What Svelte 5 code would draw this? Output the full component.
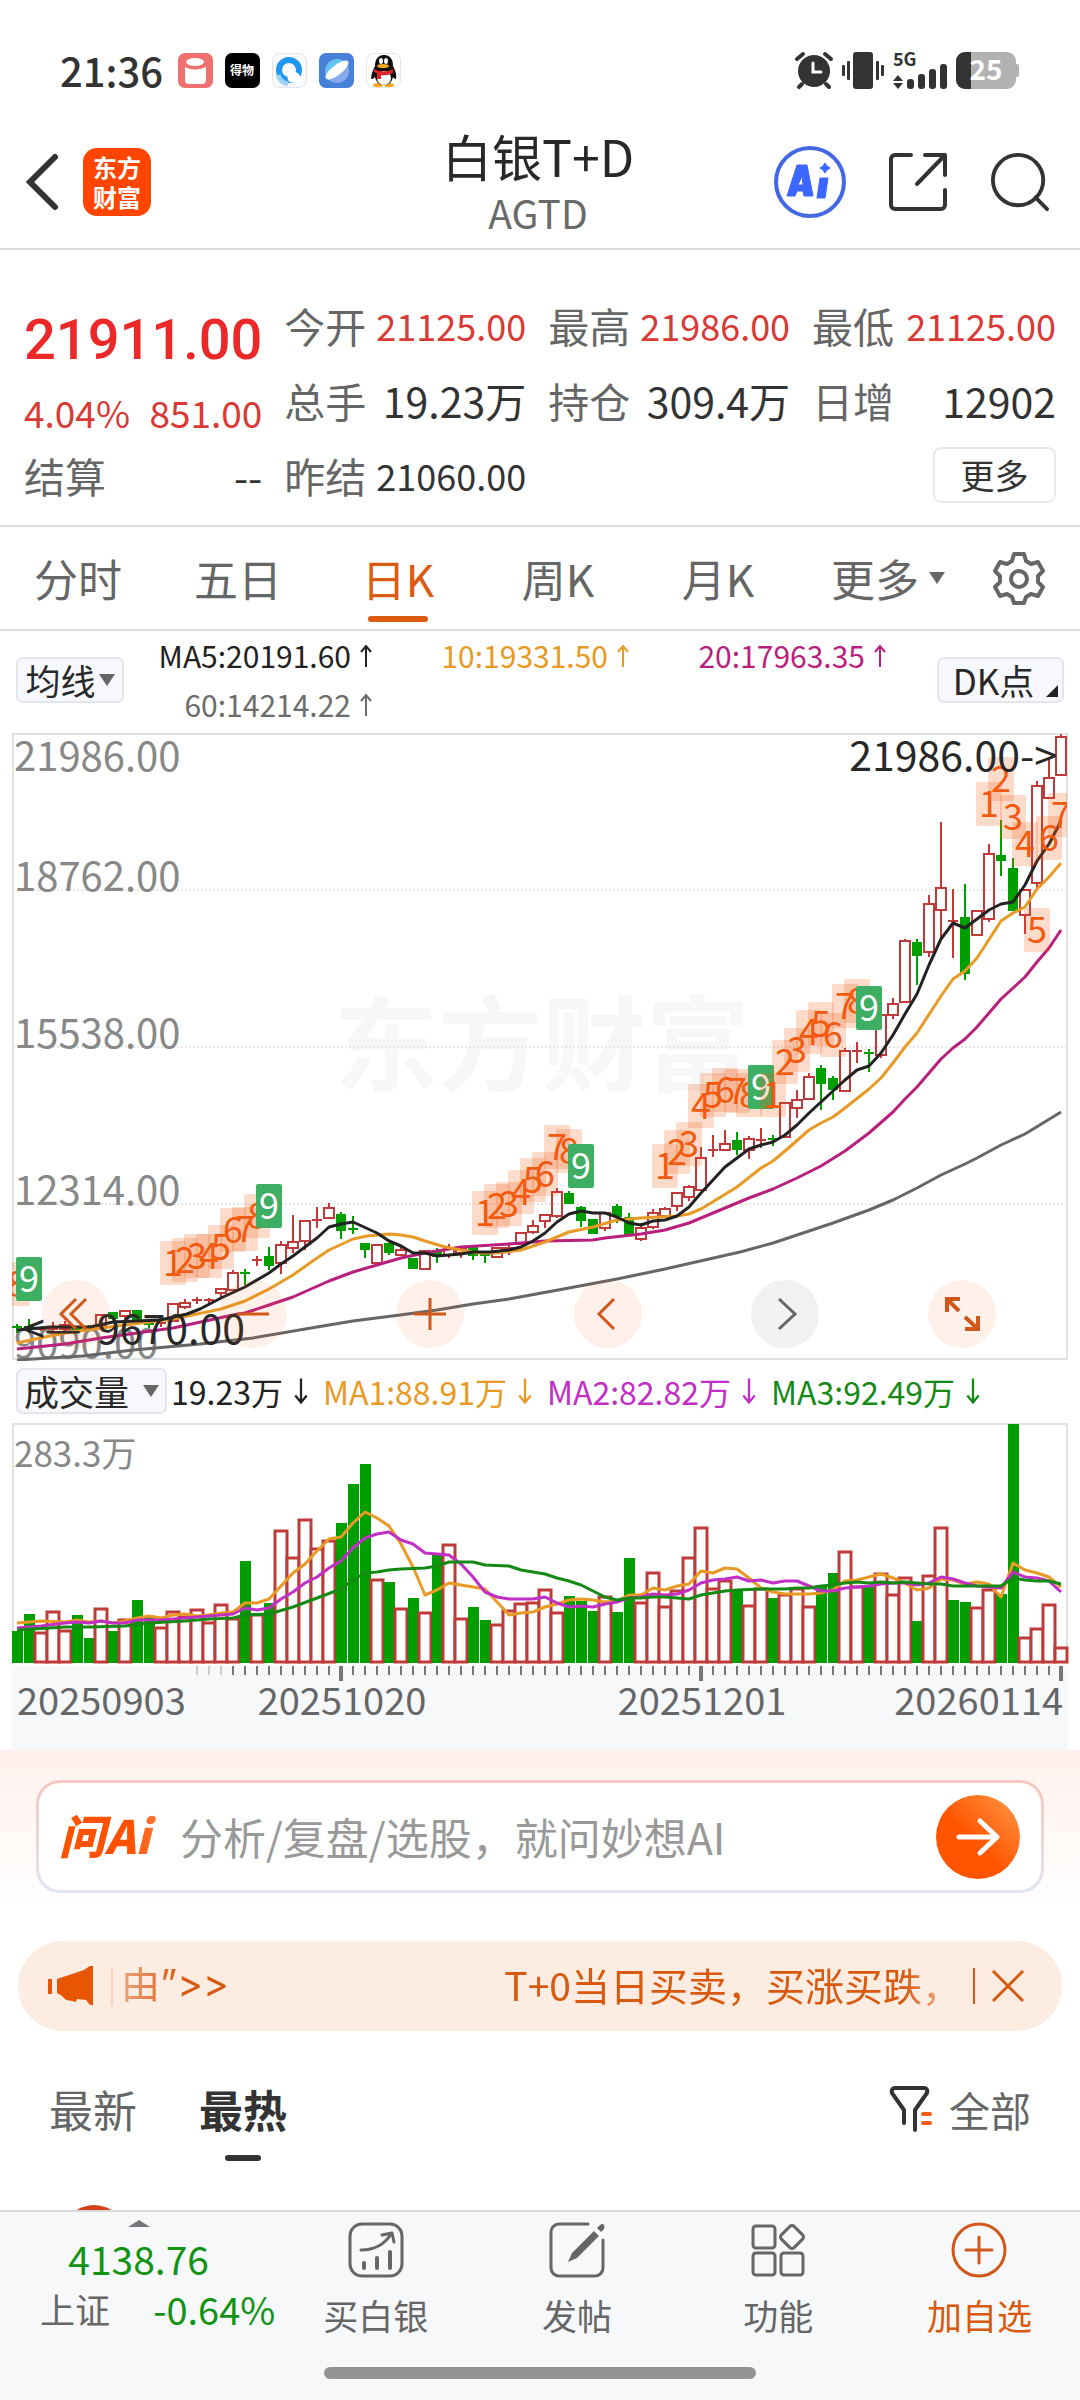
<script>
  const step = 12;
  const x = (i) => 17 + step * i;

  // direction, high, body top, body bottom, low
  const candles = `
g 591 594 595 600|g 586 594 595 600|r 595 596 597 598|r 589 596 597 598|r 588 592 596 598|g 594 596 597 599|g 592 594 595 598|r 581 582 593 595
g 580 580 585 585|r 577 578 583 588|g 578 578 587 587|g 586 591 592 595|r 588 590 591 594|r 571 571 588 588|r 566 570 574 576|r 564 567 568 571
r 565 567 568 571|r 555 556 560 566|r 537 540 557 558|g 536 540 541 552|r 523 527 528 533|g 514 524 532 537|r 508 512 530 541|r 482 509 515 520
r 488 488 508 517|r 474 487 488 495|r 470 475 485 486|g 479 482 497 506|g 483 496 497 501|g 511 511 516 525|r 512 512 530 530|g 511 511 519 522
r 514 517 522 522|g 526 526 535 536|r 518 518 536 537|g 515 518 523 530|r 511 515 522 525|r 513 515 520 525|g 515 515 522 527|g 520 522 524 530
r 515 515 524 524|r 510 515 518 522|r 500 500 511 512|r 487 493 499 501|r 481 482 488 495|r 455 459 483 485|g 458 461 470 471|g 473 475 487 494
g 486 487 500 501|r 479 480 495 498|g 471 474 483 490|g 480 485 501 501|r 490 495 506 508|r 476 480 494 496|r 474 476 483 485|r 460 460 473 478
r 452 454 464 468|r 414 425 457 458|r 402 417 418 424|r 397 411 417 417|g 399 408 416 422|r 403 406 417 426|r 395 407 408 415|g 402 406 407 413
r 370 370 404 404|r 357 367 375 385|r 340 344 366 366|g 332 336 350 377|g 343 346 356 367|r 315 318 358 358|r 309 318 319 330|g 316 320 321 339
r 282 282 322 325|r 265 271 282 286|r 206 208 269 270|g 206 210 222 252|r 162 171 219 224|r 89 155 177 205|r 156 188 190 225|g 151 185 240 247
r 178 178 202 202|r 111 121 186 189|g 87 123 127 143|g 125 136 177 178|r 157 157 182 201|r 48 53 150 155|r 25 45 65 65|r 1 4 42 42`
    .trim()
    .split(/[|\n]/)
    .map((row, i) => {
      const [dir, high, top, bottom, low] = row.split(' ');
      return { x: x(i), dir, high: +high, top: +top, bottom: +bottom, low: +low };
    });

  const averages = [
    { name: 'ma60', points: '17,627 83,623 133,617 200,611 253,605 317,594 353,588 400,582 437,577 473,571 509,566 569,555 617,546 665,536 740,519 773,510 797,502 833,490 869,477 893,467 917,455 941,442 965,431 977,425 1001,412 1025,401 1061,379' },
    { name: 'ma20', points: '17,616 65,611 101,605 137,600 173,595 233,582 245,580 269,572 293,564 329,548 353,539 377,532 401,525 425,520 461,514 509,511 545,508 593,507 605,505 641,501 665,497 689,490 713,480 749,465 773,456 797,445 821,433 845,418 869,400 893,379 905,366 917,354 941,326 953,315 965,306 977,294 1001,266 1025,244 1037,229 1049,215 1061,197' },
    { name: 'ma10', points: '17,610 40,605 65,600 101,595 133,591 173,586 197,581 221,576 245,568 269,556 293,542 317,525 329,517 353,506 367,503 389,501 401,502 413,504 425,508 445,514 461,517 477,520 497,520 521,517 545,509 569,499 593,494 617,487 641,485 677,483 689,481 701,476 737,454 761,435 773,428 785,418 809,397 821,390 833,384 845,375 869,356 881,345 893,330 905,314 917,300 941,263 953,246 965,238 977,225 1001,188 1013,180 1025,174 1037,156 1049,144 1061,130' },
    { name: 'ma5', points: '17,597 50,594 90,594 113,589 160,587 187,581 200,576 221,565 245,554 269,540 281,531 293,523 305,514 317,505 329,494 341,491 353,489 377,500 389,508 401,513 413,520 425,520 437,523 461,521 473,519 490,519 509,517 521,514 533,508 545,500 557,489 569,481 581,478 593,480 605,480 617,484 629,490 641,492 653,488 665,487 677,483 689,474 701,460 713,447 725,434 737,425 749,416 761,412 773,409 785,402 797,392 809,380 821,369 833,358 845,347 857,337 869,333 881,320 893,302 905,281 917,261 929,232 941,206 953,190 965,195 977,186 989,177 1001,171 1013,169 1025,152 1037,128 1049,111 1061,88' }
  ];

  // candle index, count, top of the badge
  const badges = [
    [0, 8, 529], [1, 9, 524],
    [13, 1, 508], [14, 2, 505], [15, 3, 501], [16, 4, 501], [17, 5, 492], [18, 6, 475], [19, 7, 474], [20, 8, 461], [21, 9, 451],
    [39, 1, 458], [40, 2, 451], [41, 3, 449], [42, 4, 437], [43, 5, 425], [44, 6, 419], [45, 7, 392], [46, 8, 396], [47, 9, 411],
    [54, 1, 411], [55, 2, 397], [56, 3, 389], [57, 4, 351], [58, 5, 340], [59, 6, 335], [60, 7, 336], [61, 8, 340], [62, 9, 332],
    [63, 1, 340], [64, 2, 307], [65, 3, 295], [66, 4, 277], [67, 5, 269], [68, 6, 280], [69, 7, 251], [70, 8, 246], [71, 9, 253],
    [81, 1, 49], [82, 2, 24], [83, 3, 62], [84, 4, 89], [85, 5, 175], [86, 6, 83], [87, 7, 60]
  ];

  // bar heights; a negative value is a falling day
  const volumes = [
    -32, -49, 31, 52, 33, -48, -25, 55, -32, 44, -63, -46, 36, 52, 47, 54, 41, 59, 45, -102, 49, -60, 133, 106, 144, 115, 123, -140,
    -179, -199, 84, -81, 55, -65, 51, -108, 119, 45, -56, -43, 39, 53, 60, 61, 74, 51, -67, -62, -52, 67, -51, -105, 61, 91, 57, 73,
    106, 136, 75, 83, -73, 58, 75, -65, 69, 75, 57, -78, -90, 112, 77, -76, 90, 69, 86, -42, 88, 136, -63, -61, 56, 74, -69, -239,
    26, 35, 59, 16
  ];
  const base = 240;

  const line = (text) =>
    text
      .split(' ')
      .map((pair) => {
        const [i, level] = pair.split(':').map(Number);
        return `${x(i)},${Math.round(level / 3 - 63)}`;
      })
      .join(' ');

  const volumeLines = [
    { name: 'v1', points: line('0:789 2:783 4:787 5:780 6:785 7:782 8:788 9:784 10:775 11:767 12:773 13:765 14:763 15:768 16:765 17:758 18:757 19:729 20:730 21:717 22:677 23:640 24:612 25:572 26:537 27:531 28:490 29:457 30:475 31:498 32:552 33:620 34:706 35:690 36:670 37:676 38:681 39:687 40:727 41:766 42:758 43:755 44:740 45:732 46:720 47:717 48:721 49:727 50:723 51:706 52:705 53:685 54:690 55:677 56:673 57:633 58:638 59:625 60:627 61:655 62:685 63:697 64:703 65:701 66:702 67:700 68:690 69:663 70:661 71:650 72:643 73:655 74:668 75:690 76:684 77:657 78:660 79:672 80:667 81:672 82:712 83:610 84:630 85:640 86:650 87:680') },
    { name: 'v2', points: line('0:803 2:797 4:790 5:787 6:790 7:784 8:790 9:788 10:780 12:780 13:777 15:770 17:765 18:762 19:745 20:749 21:743 22:717 23:697 24:670 25:650 26:625 27:603 28:563 29:535 30:523 31:517 32:540 33:553 34:579 35:582 36:584 37:612 38:650 39:695 40:710 41:717 42:717 43:718 44:712 45:730 46:742 47:738 48:740 49:733 50:727 51:715 52:710 53:703 54:706 55:703 56:691 57:670 58:661 59:657 60:652 61:664 62:660 63:668 64:664 65:664 66:677 67:692 68:692 69:684 70:680 71:678 72:672 73:670 74:668 75:674 76:668 77:650 78:657 79:670 80:677 81:680 82:685 83:635 84:650 85:655 86:663 87:697') },
    { name: 'v3', points: line('0:810 4:800 6:802 9:797 11:788 14:783 16:777 18:775 19:766 21:762 23:740 25:713 27:687 28:660 29:640 30:635 31:631 32:628 34:625 35:618 36:605 38:606 39:614 41:618 42:630 43:637 44:642 45:653 46:664 47:676 48:693 49:712 50:719 51:714 52:714 53:711 54:711 55:715 56:717 57:704 58:700 59:693 60:690 62:686 64:686 65:684 66:684 67:678 68:675 69:668 70:665 71:670 72:667 73:669 74:667 75:670 76:672 77:673 78:677 80:679 82:678 83:653 84:660 85:664 86:663 87:673') }
  ];

  const ticks = Array.from({ length: 73 }, (_, n) => n + 15);
  const isMajor = (i) => i === 27 || i === 57 || i === 87;

  const quotes = [
    { label: '今开', value: '21125.00', tone: 'red' },
    { label: '最高', value: '21986.00', tone: 'red' },
    { label: '最低', value: '21125.00', tone: 'red' },
    { label: '总手', value: '19.23万', tone: 'big' },
    { label: '持仓', value: '309.4万', tone: 'big' },
    { label: '日增', value: '12902', tone: 'big' }
  ];

  const periods = ['分时', '五日', '日K', '周K', '月K'];
  let period = $state('日K');
  let sort = $state('最热');
</script>

{#snippet arrow(down)}
  <svg class="arrow" class:down viewBox="0 0 14 24" aria-hidden="true">
    <path d="M7 23V2M2 8l5-6 5 6" fill="none" stroke="currentColor" stroke-width="2" />
  </svg>
{/snippet}

<main class="page">
  <div class="status">
    <span class="clock">21:36</span>
    <div class="apps">
      <svg viewBox="0 0 35 35" aria-hidden="true">
        <rect width="35" height="35" rx="7" fill="#f07070" />
        <path d="M7 14q10 5 21 0v13q0 4-4 4H11q-4 0-4-4z" fill="#fff" />
        <ellipse cx="17" cy="9" rx="9" ry="4" fill="#fff" />
      </svg>
      <svg viewBox="0 0 35 35" aria-hidden="true">
        <rect width="35" height="35" rx="7" fill="#000" />
        <text x="17" y="22" class="dewu" text-anchor="middle">得物</text>
      </svg>
      <svg viewBox="0 0 35 35" aria-hidden="true">
        <rect x=".5" y=".5" width="34" height="34" rx="7" fill="#f8fafc" stroke="#e2e4e8" />
        <circle cx="17" cy="17" r="10" fill="none" stroke="#2196ee" stroke-width="6" />
        <path d="M6 22a12 12 0 0 0 10 9" fill="none" stroke="#9fd4f8" stroke-width="5" />
        <path d="M18 29a5 5 0 0 1 1-9 6 6 0 0 1 9 3 4 4 0 0 1 1 7z" fill="#fff" />
      </svg>
      <svg viewBox="0 0 35 35" aria-hidden="true">
        <rect width="35" height="35" rx="7" fill="#4680d8" />
        <circle cx="18" cy="18" r="12" fill="#85a9ea" />
        <path d="M7 22A12 12 0 0 1 28 11z" fill="#5fc4f0" />
        <ellipse cx="18" cy="17" rx="14" ry="5" fill="#fff" transform="rotate(-38 18 17)" />
      </svg>
      <svg viewBox="0 0 35 35" aria-hidden="true">
        <rect x=".5" y=".5" width="34" height="34" rx="7" fill="#fff" stroke="#e6e6e6" />
        <ellipse cx="12" cy="32" rx="5" ry="2" fill="#f6a820" />
        <ellipse cx="23" cy="32" rx="5" ry="2" fill="#f6a820" />
        <path d="M9 13c0-7 3-11 9-11s9 4 9 11c2 4 4 8 3 13-2 0-3-2-3-2-1 5-4 8-9 8s-8-3-9-8c0 0-1 2-4 2 0-5 2-9 4-13z" fill="#111" />
        <ellipse cx="18" cy="25" rx="7" ry="7" fill="#fff" />
        <path d="M8 16q10 5 19 0v4q-6 3-12 2v4h-4v-6l-3-1z" fill="#e0202a" />
        <ellipse cx="15" cy="8" rx="2" ry="3" fill="#fff" />
        <ellipse cx="20" cy="8" rx="2" ry="3" fill="#fff" />
        <ellipse cx="17" cy="13" rx="6" ry="2" fill="#f6a820" />
      </svg>
    </div>
    <div class="system">
      <svg class="alarm" viewBox="0 0 38 38" fill="none" stroke="#333" stroke-linecap="round" aria-label="闹钟">
        <circle cx="19" cy="20" r="16" fill="#333" stroke="none" />
        <path d="M2 8l6-5M36 8l-6-5" stroke-width="4" />
        <path d="M7 33l-3 3M31 33l3 3" stroke-width="4" />
        <path d="M18 12v9h8" stroke="#fff" stroke-width="3" />
      </svg>
      <svg class="vibrate" viewBox="0 0 42 38" fill="#333" aria-label="振动">
        <rect x="11" y="1" width="20" height="37" rx="3" />
        <rect x="5" y="10" width="3" height="19" rx="1" /><rect x="34" y="10" width="3" height="19" rx="1" />
        <rect y="14" width="3" height="11" rx="1" /><rect x="39" y="14" width="3" height="11" rx="1" />
      </svg>
      <svg class="signal" viewBox="0 0 54 38" fill="#333" aria-label="5G">
        <text x="0" y="15" class="g5">5G</text>
        <path d="M5 24l5 6H0zM5 38l5-6H0z" />
        <rect x="14" y="28" width="7" height="10" rx="3" /><rect x="25" y="23" width="7" height="15" rx="3" />
        <rect x="36" y="18" width="7" height="20" rx="3" /><rect x="47" y="13" width="7" height="25" rx="3" />
      </svg>
      <svg class="battery" viewBox="0 0 64 38" aria-label="电量">
        <rect y="1" width="60" height="37" rx="9" fill="#b2b2b2" />
        <rect x="58" y="13" width="5" height="13" rx="2" fill="#b2b2b2" />
        <path d="M15 1H9a9 9 0 0 0-9 9v19a9 9 0 0 0 9 9h6z" fill="#333" />
        <text x="30" y="29" class="charge" text-anchor="middle">25</text>
      </svg>
    </div>
  </div>

  <header class="header">
    <div class="side">
      <button class="bare" aria-label="返回">
        <svg class="back" viewBox="0 0 34 58" aria-hidden="true"><path d="M29 4L4 29l25 25" fill="none" stroke="#333" stroke-width="6" stroke-linecap="round" /></svg>
      </button>
      <div class="brand"><span>东方</span><span>财富</span></div>
    </div>
    <div class="title">
      <h1>白银T+D</h1>
      <p>AGTD</p>
    </div>
    <div class="side tools">
      <button class="bare" aria-label="Ai">
        <svg class="icon72" viewBox="0 0 72 74" aria-hidden="true">
          <circle cx="36" cy="37" r="34" fill="none" stroke="#4468e4" stroke-width="4" />
          <path fill-rule="evenodd" d="M23 20h10l6 31h-9l-1-5h-6l-2 5h-8zM28 31l-4 9h5z" fill="#3b66ff" stroke="#3b66ff" stroke-linejoin="round" />
          <path d="M46 33h8l-3 20h-8z" fill="#3b66ff" stroke="#3b66ff" stroke-linejoin="round" />
          <path d="M51 18l2 3 3 2-3 2-2 3-2-3-3-2 3-2z" fill="#3b66ff" stroke="#3b66ff" />
        </svg>
      </button>
      <button class="bare" aria-label="分享">
        <svg class="icon58" viewBox="0 0 58 60" fill="none" stroke="#333" stroke-width="4" stroke-linecap="round" stroke-linejoin="round" aria-hidden="true">
          <path d="M22 3H6a4 4 0 0 0-4 4v46a4 4 0 0 0 4 4h46a4 4 0 0 0 4-4V38M36 3h20v20M56 3L28 32" />
        </svg>
      </button>
      <button class="bare" aria-label="搜索">
        <svg class="icon58" viewBox="0 0 60 62" fill="none" stroke="#333" stroke-width="4" stroke-linecap="round" aria-hidden="true">
          <circle cx="28" cy="29" r="26" /><path d="M46 47l12 12" />
        </svg>
      </button>
    </div>
  </header>

  <section class="quote">
    <div class="last">
      <strong>21911.00</strong>
      <div class="change"><span>4.04%</span><span>851.00</span></div>
    </div>
    {#each quotes as q}
      <div class="cell"><span class="label">{q.label}</span><span class="value {q.tone}">{q.value}</span></div>
    {/each}
    <div class="cell"><span class="label">结算</span><span class="value big">--</span></div>
    <div class="cell"><span class="label">昨结</span><span class="value">21060.00</span></div>
    <div class="cell"></div>
    <div class="cell end"><button class="more">更多</button></div>
  </section>

  <nav class="periods">
    {#each periods as p}
      <button class:active={period === p} onclick={() => (period = p)}>{p}</button>
    {/each}
    <button class="wide">更多<span class="caret"></span></button>
    <button class="gear" aria-label="设置">
      <svg viewBox="0 0 52 52" fill="none" stroke="#666" stroke-width="4" stroke-linejoin="round" aria-hidden="true">
        <path d="M21 2h10l2 7 5 3 7-2 5 9-5 5v6l5 5-5 9-7-2-5 3-2 6H21l-2-6-5-3-7 2-5-9 5-5v-6l-5-5 5-9 7 2 5-3z" />
        <circle cx="26" cy="27" r="8" />
      </svg>
    </button>
  </nav>

  <section class="legend">
    <button class="chip">均线<span class="caret"></span></button>
    <div class="values">
      <span class="c-ma5">MA5:20191.60{@render arrow(false)}</span>
      <span class="c-ma10">10:19331.50{@render arrow(false)}</span>
      <span class="c-ma20">20:17963.35{@render arrow(false)}</span>
      <span class="c-ma60">60:14214.22{@render arrow(false)}</span>
    </div>
    <button class="chip dk">DK点<span class="corner"></span></button>
  </section>

  <section class="price">
    <svg viewBox="12 0 1056 628" role="img" aria-label="日K">
      <defs><clipPath id="pane"><rect x="12" y="0" width="1055" height="628" /></clipPath></defs>
      <text x="542" y="351" class="watermark" text-anchor="middle">东方财富</text>
      <g class="grid">
        <path d="M13 157H1067M13 314H1067M13 471H1067" />
      </g>
      <rect x="13" y="1" width="1054" height="625" class="frame" />
      <g class="scale">
        <text x="14" y="38">21986.00</text>
        <text x="14" y="158">18762.00</text>
        <text x="14" y="315">15538.00</text>
        <text x="14" y="472">12314.00</text>
        <text x="14" y="625">9090.00</text>
      </g>
      <g clip-path="url(#pane)">
        {#each candles as c}
          <g class={c.dir === 'r' ? 'up' : 'fall'}>
            {#if c.bottom - c.top < 3}
              <path d="M{c.x} {c.high}V{c.low}M{c.x - 5} {c.top}h10" />
            {:else if c.dir === 'r'}
              <path d="M{c.x} {c.high}V{c.top}M{c.x} {c.bottom}V{c.low}" />
              <rect x={c.x - 5} y={c.top} width="10" height={c.bottom - c.top} />
            {:else}
              <path d="M{c.x} {c.high}V{c.low}" />
              <rect x={c.x - 4} y={c.top} width="8" height={c.bottom - c.top} />
            {/if}
          </g>
        {/each}
        {#each averages as a}<polyline class="line {a.name}" points={a.points} />{/each}
        {#each badges as [i, n, top]}
          <rect class={n === 9 ? 'badge nine' : 'badge'} x={x(i) - 13} y={top} width="26" height="44" rx="2" />
          <text class={n === 9 ? 'count white' : 'count'} x={x(i)} y={top + 35} text-anchor="middle">{n}</text>
        {/each}
      </g>
      <text x="1057" y="38" class="extreme" text-anchor="end">21986.00-&gt;</text>
      <text x="22" y="611" class="extreme">&lt;—</text>
      <text x="97" y="611" class="extreme">9670.00</text>
    </svg>
    <div class="controls">
      <button aria-label="最左"><svg viewBox="0 0 68 68" aria-hidden="true"><path d="M34 19L19 34l15 15M44 19L29 34l15 15" /></svg></button>
      <button aria-label="缩小"><svg viewBox="0 0 68 68" aria-hidden="true"><path d="M18 34h32" /></svg></button>
      <button aria-label="放大"><svg viewBox="0 0 68 68" aria-hidden="true"><path d="M18 34h32M34 18v32" /></svg></button>
      <button aria-label="左移"><svg viewBox="0 0 68 68" aria-hidden="true"><path d="M40 19L25 34l15 15" /></svg></button>
      <button class="off" aria-label="右移"><svg viewBox="0 0 68 68" aria-hidden="true"><path d="M28 19l16 15-16 15" /></svg></button>
      <button aria-label="全屏"><svg viewBox="0 0 68 68" aria-hidden="true"><path d="M19 32V19h13M19 19l12 12M50 36v13H37M50 49L37 37" class="bold" /></svg></button>
    </div>
  </section>

  <section class="indicator">
    <button class="chip volume-chip">成交量<span class="caret"></span></button>
    <span>19.23万{@render arrow(true)}</span>
    <span class="c-ma10">MA1:88.91万{@render arrow(true)}</span>
    <span class="c-v2">MA2:82.82万{@render arrow(true)}</span>
    <span class="c-v3">MA3:92.49万{@render arrow(true)}</span>
  </section>

  <section class="volume">
    <svg viewBox="12 0 1056 327" role="img" aria-label="成交量">
      <rect x="12" y="242" width="1056" height="85" fill="#f7f8fa" />
      <path d="M13 241V1H1067V241" class="frame" />
      <text x="14" y="44" class="max">283.3万</text>
      {#each volumes as v, i}
        {#if v < 0}
          <rect x={x(i) - 5} y={base + v} width="11" height={-v} fill="#009e00" />
        {:else}
          <rect x={x(i) - 6} y={base - v + 1} width="12" height={v - 2} class="hollow" />
        {/if}
      {/each}
      {#each volumeLines as l}<polyline class="line {l.name}" points={l.points} />{/each}
      {#each ticks as i}
        <path class={isMajor(i) ? 'tick major' : i < 18 ? 'tick faint' : 'tick'} d="M{x(i)} 243v{isMajor(i) ? 15 : 9}" />
      {/each}
      <g class="dates">
        <text x="17" y="292">20250903</text>
        <text x="342" y="292" text-anchor="middle">20251020</text>
        <text x="702" y="292" text-anchor="middle">20251201</text>
        <text x="1063" y="292" text-anchor="end">20260114</text>
      </g>
    </svg>
  </section>

  <section class="ask">
    <form class="ask-box" onsubmit={(e) => e.preventDefault()}>
      <span class="ask-logo">问Ai</span>
      <input type="text" aria-label="问Ai" placeholder="分析/复盘/选股，就问妙想AI" />
      <button class="send" aria-label="发送">
        <svg viewBox="0 0 84 84" fill="none" stroke="#fff" stroke-width="5" stroke-linecap="round" stroke-linejoin="round" aria-hidden="true">
          <path d="M23 42h38M44 26l17 16-17 16" />
        </svg>
      </button>
    </form>
  </section>

  <section class="notice">
    <svg class="horn" viewBox="0 0 46 40" fill="#e85504" aria-hidden="true">
      <path d="M0 13h4v15H0zM9 13L36 4l6-4h3v39h-3l-4-5-9-1-1 3-4-1-6-1-4-4-5-3z" />
    </svg>
    <div class="marquee"><span class="tail">由”&gt;&gt;</span><a href="#trade">T+0当日买卖，买涨买跌，</a></div>
    <button class="close" aria-label="关闭">
      <svg viewBox="0 0 32 32" aria-hidden="true"><path d="M1 1l30 30M31 1L1 31" stroke="#d9590f" stroke-width="3" /></svg>
    </button>
  </section>

  <section class="feed">
    <div class="feed-tabs">
      {#each ['最新', '最热'] as s}
        <button class:active={sort === s} onclick={() => (sort = s)}>{s}</button>
      {/each}
      <button class="filter">
        <svg viewBox="0 0 43 46" fill="none" stroke-width="4" stroke-linecap="round" stroke-linejoin="round" aria-hidden="true">
          <path d="M14 37V24L2 7q-1-5 3-5h29q4 0 3 5L25 24v20" stroke="#333" />
          <path d="M33 28h7M33 37h7" stroke="#ee5f14" />
        </svg>
        全部
      </button>
    </div>
    <div class="post"><span class="avatar"></span></div>
  </section>

  <footer class="dock">
    <div class="bar">
      <button class="index">
        <span class="up-caret"></span>
        <span class="points">4138.76</span>
        <span class="row"><span class="name">上证</span><span class="rate">-0.64%</span></span>
      </button>
      <button>
        <svg viewBox="0 0 56 56" aria-hidden="true"><rect x="2" y="2" width="52" height="52" rx="12" /><path d="M13 28q20 0 30-16M34 13l10-2 2 9" /><path d="M16 41v5M29 36v10M42 30v16" stroke-width="4" /></svg>
        买白银
      </button>
      <button>
        <svg viewBox="0 0 56 56" aria-hidden="true"><path d="M39 2H10a8 8 0 0 0-8 8v36a8 8 0 0 0 8 8h36a8 8 0 0 0 8-8V18" /><path d="M45 9l5 5-22 22-9 4 4-9zM48 6l3-3q3-2 4 0t0 4l-3 3z" fill="#666" stroke="none" /></svg>
        发帖
      </button>
      <button>
        <svg viewBox="0 0 56 56" aria-hidden="true"><rect x="3" y="4" width="22" height="22" rx="3" /><rect x="3" y="31" width="22" height="22" rx="3" /><rect x="31" y="31" width="22" height="22" rx="3" /><rect x="33" y="6" width="18" height="18" rx="3" transform="rotate(45 42 15)" /></svg>
        功能
      </button>
      <button class="add">
        <svg viewBox="0 0 56 56" aria-hidden="true"><circle cx="28" cy="28" r="26" /><path d="M15 28h26M28 15v26" /></svg>
        加自选
      </button>
    </div>
    <span class="home"></span>
  </footer>
</main>

<style>
  :global(body) { margin: 0; background: #fff; }
  .page {
    display: flex;
    flex-direction: column;
    font-family: "Noto Sans CJK SC", "Noto Sans", sans-serif;
    color: #333;
    background: #fff;
    overflow: hidden;
  }
  button {
    font: inherit;
    color: inherit;
    background: none;
    border: 0;
    padding: 0;
    margin: 0;
  }
  svg { display: block; overflow: visible; }
  h1, p { margin: 0; font-weight: 400; }

  .status {
    display: flex;
    align-items: center;
    height: 110px;
    padding: 30px 60px 0;
    box-sizing: border-box;
  }
  .clock { font-size: 40px; font-weight: 500; line-height: 44px; margin-right: 15px; }
  .apps { display: flex; gap: 12px; }
  .apps svg { width: 35px; height: 35px; }
  .dewu { font-size: 12px; font-weight: 700; fill: #fff; }
  .system { display: flex; gap: 9px; margin-left: auto; }
  .system svg { height: 38px; }
  .alarm { width: 38px; }
  .vibrate { width: 42px; }
  .signal { width: 54px; }
  .battery { width: 64px; }
  .g5 { font-size: 18px; font-weight: 700; }
  .charge { font-size: 28px; font-weight: 700; fill: #fff; }

  .header {
    display: grid;
    grid-template-columns: 1fr auto 1fr;
    align-items: center;
    height: 140px;
    padding: 5px 30px 0 26px;
    box-sizing: border-box;
    border-bottom: 2px solid #dcdcdc;
  }
  .side { display: flex; align-items: center; gap: 23px; }
  .back { width: 34px; height: 58px; }
  .brand {
    display: flex;
    flex-direction: column;
    align-items: center;
    justify-content: center;
    width: 68px;
    height: 68px;
    border-radius: 14px;
    background: #ff4500;
    color: #fff;
    font-size: 24px;
    font-weight: 700;
    line-height: 30px;
  }
  .title { text-align: center; }
  h1 { font-size: 50px; line-height: 60px; color: #282828; }
  p { font-size: 39px; line-height: 54px; color: #6a6a6a; }
  .tools { justify-content: flex-end; gap: 42px; }
  .icon72 { width: 72px; height: 74px; }
  .icon58 { width: 60px; height: 60px; }

  .quote {
    display: grid;
    grid-template-columns: 238fr 242fr 242fr 244fr;
    grid-template-rows: repeat(3, 75px);
    column-gap: 22px;
    padding: 37px 24px 13px;
    border-bottom: 2px solid #dcdcdc;
  }
  .last { grid-row: span 2; color: #d93a35; }
  .last strong { display: block; font-family: Roboto, sans-serif; font-size: 56px; font-weight: 500; line-height: 106px; color: #ec2828; }
  .change { display: flex; justify-content: space-between; font-size: 37px; line-height: 38px; }
  .cell { display: flex; align-items: center; justify-content: space-between; white-space: nowrap; }
  .label { font-size: 41px; color: #666; }
  .value { font-size: 36px; }
  .red { color: #d93a35; }
  .big { font-size: 41px; }
  .end { justify-content: flex-end; }
  .more {
    width: 123px;
    height: 56px;
    border: 2px solid #e8eaec;
    border-radius: 8px;
    font-size: 34px;
    line-height: 48px;
  }

  .periods { display: grid; grid-template-columns: repeat(5, 160fr) 180fr 100fr; height: 102px; border-bottom: 2px solid #dcdcdc; font-size: 44px; color: #666; }
  .periods button { position: relative; line-height: 100px; padding-right: 4px; }
  .periods .wide { display: flex; align-items: center; justify-content: center; gap: 10px; }
  .periods .gear { display: flex; align-items: center; padding-left: 13px; }
  .gear svg { width: 52px; height: 52px; }
  .periods .active { color: #dc5a12; }
  .periods .active::after {
    content: "";
    position: absolute;
    left: calc(50% - 32px);
    bottom: 7px;
    width: 60px;
    height: 6px;
    border-radius: 3px;
    background: #dc5a12;
  }
  .caret { display: inline-block; border: 8px solid transparent; border-top: 12px solid #666; border-bottom: 0; }

  .legend { display: flex; align-items: center; height: 102px; padding: 0 16px 4px; box-sizing: border-box; }
  .chip {
    display: flex;
    align-items: center;
    justify-content: center;
    gap: 3px;
    height: 46px;
    width: 108px;
    box-sizing: border-box;
    border: 2px solid #e4e6ea;
    border-radius: 7px;
    background: #f7f8fb;
    font-size: 35px;
    line-height: 42px;
    color: #282828;
    white-space: nowrap;
  }
  .dk { width: 127px; position: relative; padding-right: 14px; margin-left: auto; }
  .corner { position: absolute; right: 4px; bottom: 4px; border: 6px solid #222; border-top-color: transparent; border-left-color: transparent; }
  .values { display: grid; grid-template-columns: 249px 257px 257px; font-size: 30px; line-height: 49px; }
  .values span { display: flex; align-items: center; justify-content: flex-end; gap: 8px; }
  .arrow { width: 14px; height: 24px; flex: none; }
  .down { transform: rotate(180deg); }
  .c-ma5 { color: #222; }
  .c-ma10 { color: #e89a25; }
  .c-ma20 { color: #b91f7c; }
  .c-ma60 { color: #6c6c6c; }
  .c-v2 { color: #c22fc6; }
  .c-v3 { color: #148a14; }

  .price { position: relative; margin: 0 12px; }
  .price > svg, .volume svg { width: 100%; height: auto; }
  .watermark { font-size: 104px; font-weight: 700; fill: #f7f7f7; }
  .grid { stroke: #e8e8e8; stroke-width: 2; stroke-dasharray: 2 2; }
  .frame { fill: none; stroke: #e2e2e2; stroke-width: 2; }
  .scale { font-size: 40px; fill: #888; }
  .extreme { font-size: 41px; fill: #282828; }
  .up { fill: none; stroke: #c03a3a; stroke-width: 2; }
  .fall { fill: #009e00; stroke: #009e00; stroke-width: 2; }
  .line { fill: none; stroke-width: 3; stroke-linejoin: round; }
  .ma5 { stroke: #222; }
  .ma10 { stroke: #e89a25; }
  .ma20 { stroke: #b91f7c; }
  .ma60 { stroke: #666; }
  .badge { fill: #f25a14; fill-opacity: .22; }
  .nine { fill: #3eae62; fill-opacity: 1; }
  .count { font-size: 36px; fill: #f25a10; }
  .white { fill: #fff; }
  .controls {
    position: absolute;
    left: 30px;
    right: 72px;
    bottom: 13px;
    display: flex;
    justify-content: space-between;
  }
  .controls button { width: 68px; height: 68px; border-radius: 50%; background: rgba(255, 95, 25, .09); }
  .controls path { fill: none; stroke: #d0581a; stroke-width: 3; }
  .controls .bold { stroke-width: 4; }
  .controls .off { background: rgba(60, 60, 60, .07); }
  .controls .off path { stroke: #666; }

  .indicator { display: flex; align-items: center; gap: 14px; height: 62px; padding: 0 16px 2px; box-sizing: border-box; font-size: 32px; color: #222; white-space: nowrap; }
  .indicator > span { display: flex; align-items: center; gap: 10px; }
  .indicator .arrow { width: 16px; height: 28px; }
  .volume-chip { width: 151px; gap: 14px; margin-right: -10px; }

  .volume { margin: 0 12px; }
  .max { font-size: 35px; fill: #888; }
  .hollow { fill: #fff; stroke: #c03a3a; stroke-width: 3; }
  .v1 { stroke: #e89a25; }
  .v2 { stroke: #c22fc6; }
  .v3 { stroke: #148a14; }
  .tick { stroke: #777; stroke-width: 2; }
  .major { stroke-width: 4; }
  .faint { stroke: #ccc; }
  .dates { font-size: 38px; fill: #666; }

  .ask { padding: 30px 36px 48px; background: linear-gradient(#fff1ed, #fff 85%); }
  .ask-box {
    display: flex;
    align-items: center;
    height: 107px;
    padding: 0 21px 0 20px;
    border: 3px solid transparent;
    border-radius: 24px;
    background: linear-gradient(#fff, #fff) padding-box, linear-gradient(#f6c8c0, #dfe6f2) border-box;
  }
  .ask-logo {
    width: 121px;
    font-size: 46px;
    font-weight: 900;
    font-style: italic;
    line-height: 60px;
    padding-bottom: 5px;
    background: linear-gradient(90deg, #ff5200 60%, #ff9a6a);
    background-clip: text;
    color: transparent;
  }
  .ask-box input { flex: 1; min-width: 0; border: 0; padding: 0 0 2px; outline: 0; background: none; font: inherit; font-size: 43px; line-height: 60px; color: #333; }
  .ask-box input::placeholder { color: #999; opacity: 1; }
  .send { width: 84px; height: 84px; border-radius: 50%; background: linear-gradient(45deg, #ff5500 45%, #ff9a4a); }

  .notice {
    display: flex;
    align-items: center;
    height: 90px;
    margin: 0 18px;
    padding: 0 38px 0 30px;
    border-radius: 45px;
    background: #fcece2;
    color: #d9590f;
    font-size: 39px;
  }
  .horn { width: 46px; height: 40px; }
  .marquee {
    display: flex;
    flex: 1;
    justify-content: space-between;
    margin-left: 17px;
    padding: 0 12px 0 8px;
    line-height: 34px;
    height: 39px;
    white-space: nowrap;
    border-left: 2px solid #f2b090;
    mask-image: linear-gradient(90deg, rgba(0, 0, 0, .4), #000 70px, #000 calc(100% - 70px), rgba(0, 0, 0, .3) calc(100% - 20px));
  }
  .tail { font-family: Inter, "Noto Sans CJK SC", sans-serif; }
  .marquee a { color: inherit; text-decoration: none; }
  .close { padding-left: 17px; border-left: 2px solid #d9590f; }
  .close svg { width: 32px; height: 36px; }

  .feed { padding: 43px 49px 0; }
  .feed-tabs { display: flex; align-items: center; gap: 62px; font-size: 44px; line-height: 70px; color: #666; }
  .feed-tabs .active { position: relative; color: #333; font-weight: 700; }
  .feed-tabs .active::after {
    content: "";
    position: absolute;
    left: calc(50% - 18px);
    bottom: -17px;
    width: 36px;
    height: 6px;
    border-radius: 3px;
    background: #333;
  }
  .filter { display: flex; align-items: center; gap: 16px; margin-left: auto; font-size: 41px; }
  .filter svg { width: 43px; height: 46px; }
  .post { height: 66px; overflow: hidden; padding: 0 12px; }
  .avatar { display: block; width: 66px; height: 66px; margin-top: 61px; border-radius: 50%; background: #d8401c; }

  .dock { display: flex; flex-direction: column; align-items: center; height: 188px; border-top: 2px solid #d8d9db; background: #f7f8fa; }
  .bar { display: grid; grid-template-columns: 275fr repeat(4, 201fr); width: 100%; height: 155px; color: #666; }
  .bar button { display: flex; flex-direction: column; align-items: center; padding-top: 10px; gap: 11px; font-size: 35px; line-height: 52px; }
  .bar svg { width: 56px; height: 56px; fill: none; stroke: #666; stroke-width: 3; stroke-linecap: round; stroke-linejoin: round; }
  .bar .add { color: #d9590f; }
  .add svg { stroke: #d0581a; }
  .bar .index { gap: 0; padding: 8px 0 0 40px; align-items: stretch; }
  .up-caret { align-self: center; margin: 0 38px 5px 0; border: 11px solid transparent; border-bottom: 7px solid #77777b; border-top: 0; }
  .points { margin-right: 38px; font-size: 39px; line-height: 52px; color: #139313; text-align: center; }
  .row { display: flex; justify-content: space-between; line-height: 50px; }
  .rate { font-size: 38px; color: #139313; }
  .home { width: 40%; height: 12px; border-radius: 6px; background: #949494; }
</style>
